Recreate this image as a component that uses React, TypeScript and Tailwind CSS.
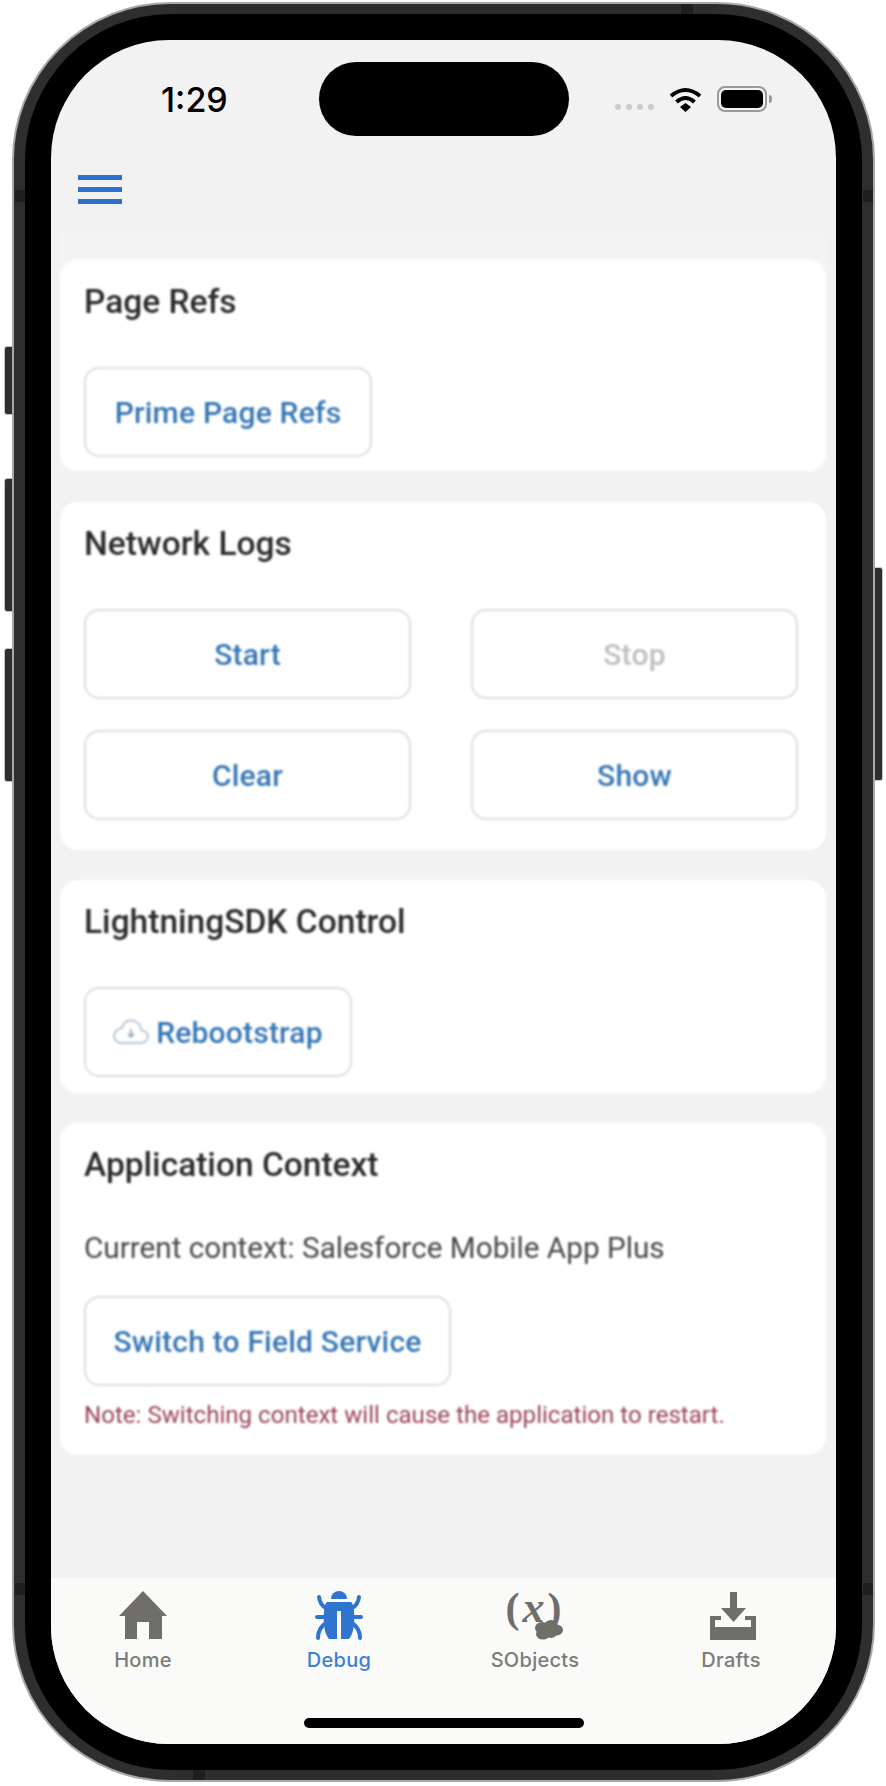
const Btn = ({ label, className = "", muted = false }: { label: string; className?: string; muted?: boolean }) => (
  <div
    className={`flex h-[90px] items-center justify-center rounded-[15px] border-2 border-[#dedede] bg-white text-[30px] font-medium tracking-[0.2px] ${
      muted ? "text-[#c0c0c0]" : "text-[#3676b5]"
    } ${className}`}
  >
    {label}
  </div>
);

const Card = ({ title, className = "", children }: { title: string; className?: string; children: React.ReactNode }) => (
  <section className={`rounded-[18px] bg-white px-[24px] ${className}`}>
    <h2 className="pt-[21px] text-[33.500px] leading-[42px] font-medium text-[#2b2b2b]">{title}</h2>
    {children}
  </section>
);

const HomeIcon = () => (
  <svg width="48" height="50" viewBox="0 0 48 50" className="mt-[1px]" fill="#6f6e6a">
    <path d="M24 0 48 25H43V48H30V31H18V48H6V25H0Z" />
  </svg>
);

const BugIcon = () => (
  <svg width="50" height="50" viewBox="0 0 50 50">
    <path d="M17 9a8 8 0 0 1 16 0Z" fill="#2f75d0" />
    <path d="M13 12H37Q39.500 14 40 21C41 36 39 44 35 49H27V21H23V49H15C11 44 9 36 10 21Q10.500 14 13 12Z" fill="#2f75d0" />
    <path d="M5 7Q6 15 12 18M45 7Q44 15 38 18M3 27H12M38 27H47M4 48Q4 38 12 33M46 48Q46 38 38 33" stroke="#2f75d0" strokeWidth="4" strokeLinecap="round" fill="none" />
  </svg>
);

const SObjectsIcon = () => (
  <div className="relative flex h-[50px] w-[56px] justify-center">
    <span className="-mt-[3px] text-[42px] leading-[42px] font-bold tracking-[3px] whitespace-nowrap text-[#6f6e6a] [font-family:'Liberation_Serif',serif]">
      (<span className="text-[44px] leading-[42px] italic">x</span>)
    </span>
    <svg width="30" height="20" viewBox="0 0 30 20" className="absolute top-[30px] right-0" fill="#6f6e6a">
      <ellipse cx="9" cy="8" rx="7" ry="6" />
      <ellipse cx="18" cy="6" rx="7" ry="6" />
      <ellipse cx="23" cy="10" rx="7" ry="5.5" />
      <ellipse cx="10" cy="14" rx="7" ry="5.5" />
      <ellipse cx="18" cy="13" rx="6" ry="5" />
    </svg>
  </div>
);

const DraftsIcon = () => (
  <svg width="46" height="50" viewBox="0 0 46 50" className="ml-[4px]" fill="#6f6e6a">
    <path d="M0 26H11V30H35V26H46V50H0ZM5 30V37H41V30Z" fillRule="evenodd" />
    <path d="M20 2H27V18H36L23.5 32 11 18H20Z" />
  </svg>
);

const WifiIcon = () => (
  <svg width="33" height="25" viewBox="0 0 33 25" fill="none" stroke="black" strokeWidth="4">
    <path d="M2 9Q16.5 -3 31 9M7.5 15Q16.5 7 25.5 15" />
    <path d="M11 20 16.5 16 22 20 16.5 25Z" fill="black" stroke="none" />
  </svg>
);

const CloudIcon = () => (
  <svg width="36" height="26" viewBox="0 0 36 26" fill="none" stroke="#b9c6d4" strokeWidth="2">
    <path d="M9 24H28C32 24 35 21 35 17.5 35 14 32 11.5 28.5 11.5 27.5 5 23 1.500 18 1.500 13 1.500 10 5 9 9 4.500 9.500 1 13 1 17 1 21 4.500 24 9 24Z" />
    <path d="M18 10V17M15 14.500 18 18 21 14.500" stroke="#8fa3b8" strokeWidth="1.600" />
  </svg>
);

const tabs = [
  { label: "Home", icon: <HomeIcon />, color: "text-[#7c7c7a]" },
  { label: "Debug", icon: <BugIcon />, color: "text-[#3b7fd6]" },
  { label: "SObjects", icon: <SObjectsIcon />, color: "text-[#7c7c7a]" },
  { label: "Drafts", icon: <DraftsIcon />, color: "text-[#7c7c7a]" },
];

export default function App() {
  return (
    <div className="h-[1786px] w-[886px] bg-white pt-[2px] pl-[12px] [font-family:Roboto,sans-serif]">
      <div className="relative h-[1780px] w-[863px]">
        {/* side buttons */}
        <div className="absolute top-[344px] left-[-8px] h-[69px] w-[9px] rounded-l-[3px] border border-r-0 border-[#c4c4c4] bg-[#2e2e2e]" />
        <div className="absolute top-[476px] left-[-8px] h-[134px] w-[9px] rounded-l-[3px] border border-r-0 border-[#c4c4c4] bg-[#2e2e2e]" />
        <div className="absolute top-[646px] left-[-8px] h-[134px] w-[9px] rounded-l-[3px] border border-r-0 border-[#c4c4c4] bg-[#2e2e2e]" />
        <div className="absolute top-[565px] right-[-8px] h-[214px] w-[9px] rounded-r-[3px] border border-l-0 border-[#c4c4c4] bg-[#2e2e2e]" />

        <div className="relative h-full rounded-[158px] border-2 border-[#a8a8a8] bg-[#2e2e2e] px-[11px] py-[10px]">
          <div className="h-full rounded-[146px] bg-black p-[26px]">
            <div className="flex h-full flex-col overflow-hidden rounded-[118px] bg-[#f2f2f2]">
              {/* status bar */}
              <div className="mt-[22px] flex h-[74px] shrink-0 items-center">
                <span className="w-[268px] pl-[110px] text-[34px] font-medium text-black [font-family:Inter,sans-serif]">1:29</span>
                <div className="h-[74px] w-[250px] rounded-full bg-black" />
                <div className="mt-[16px] ml-[46px] flex gap-[5px]">
                  <i className="h-[6px] w-[6px] rounded-full bg-[#cbcbcb]" />
                  <i className="h-[6px] w-[6px] rounded-full bg-[#cbcbcb]" />
                  <i className="h-[6px] w-[6px] rounded-full bg-[#cbcbcb]" />
                  <i className="h-[6px] w-[6px] rounded-full bg-[#cbcbcb]" />
                </div>
                <div className="ml-[15px]">
                  <WifiIcon />
                </div>
                <div className="ml-[15px] h-[26px] w-[50px] rounded-[8px] border-2 border-[#9a9a9a] p-[2px]">
                  <div className="h-full rounded-[5px] bg-black" />
                </div>
                <div className="ml-[2px] h-[8px] w-[3px] rounded-r-full bg-[#9a9a9a]" />
              </div>

              {/* hamburger */}
              <div className="flex h-[97px] shrink-0 flex-col gap-[7px] pt-[39px] pl-[27px]">
                <div className="h-[5px] w-[44px] bg-[#2e70cf]" />
                <div className="h-[5px] w-[44px] bg-[#2e70cf]" />
                <div className="h-[5px] w-[44px] bg-[#2e70cf]" />
              </div>

              {/* cards */}
              <main className="mr-[10px] ml-[9px] flex-1 blur-[0.8px]">
                <div className="bg-[#f4f4f4] pt-[27px]">
                  <Card title="Page Refs" className="h-[211px]">
                    <Btn label="Prime Page Refs" className="mt-[44px] w-[288px]" />
                  </Card>
                </div>
                <Card title="Network Logs" className="mt-[31px] h-[348px]">
                  <div className="mt-[44px] grid w-[714px] grid-cols-2 gap-x-[60px] gap-y-[31px]">
                    <Btn label="Start" />
                    <Btn label="Stop" muted />
                    <Btn label="Clear" />
                    <Btn label="Show" />
                  </div>
                </Card>
                <Card title="LightningSDK Control" className="mt-[30px] h-[213px]">
                  <div className="mt-[44px] flex h-[90px] w-[268px] items-center justify-center gap-[7px] rounded-[15px] border-2 border-[#dedede] text-[30px] font-medium tracking-[0.2px] text-[#3676b5]">
                    <CloudIcon />
                    Rebootstrap
                  </div>
                </Card>
                <Card title="Application Context" className="mt-[30px] h-[332px]">
                  <p className="mt-[42px] text-[29.700px] leading-[40px] text-[#484848]">Current context: Salesforce Mobile App Plus</p>
                  <Btn label="Switch to Field Service" className="mt-[28px] w-[367px]" />
                  <p className="mt-[13px] text-[24.100px] leading-[32px] text-[#9a4453]">Note: Switching context will cause the application to restart.</p>
                </Card>
              </main>

              {/* tab bar */}
              <nav className="h-[166px] shrink-0 bg-[#fafaf8] pt-[12px]">
                <div className="flex gap-[76px] pl-[32px]">
                  {tabs.map((tab) => (
                    <div key={tab.label} className="flex w-[120px] flex-col items-center">
                      <div className="flex h-[50px] items-start justify-center">{tab.icon}</div>
                      <span className={`mt-[8px] text-[20px] leading-[24px] font-medium tracking-[0.3px] [font-family:Inter,sans-serif] ${tab.color}`}>
                        {tab.label}
                      </span>
                    </div>
                  ))}
                </div>
                <div className="mx-auto mt-[46px] h-[10px] w-[280px] rounded-full bg-black" />
              </nav>
            </div>
          </div>
        </div>

        {/* antenna bands */}
        <div className="absolute top-[188px] left-[3px] h-[12px] w-[10px] bg-[#1f1f1f]" />
        <div className="absolute top-[188px] right-[2px] h-[12px] w-[10px] bg-[#1f1f1f]" />
        <div className="absolute top-[1581px] left-[3px] h-[12px] w-[10px] bg-[#1f1f1f]" />
        <div className="absolute top-[1581px] right-[2px] h-[12px] w-[10px] bg-[#1f1f1f]" />
        <div className="absolute top-[2px] left-[669px] h-[10px] w-[12px] bg-[#1f1f1f]" />
        <div className="absolute bottom-[2px] left-[181px] h-[10px] w-[12px] bg-[#1f1f1f]" />
      </div>
    </div>
  );
}
